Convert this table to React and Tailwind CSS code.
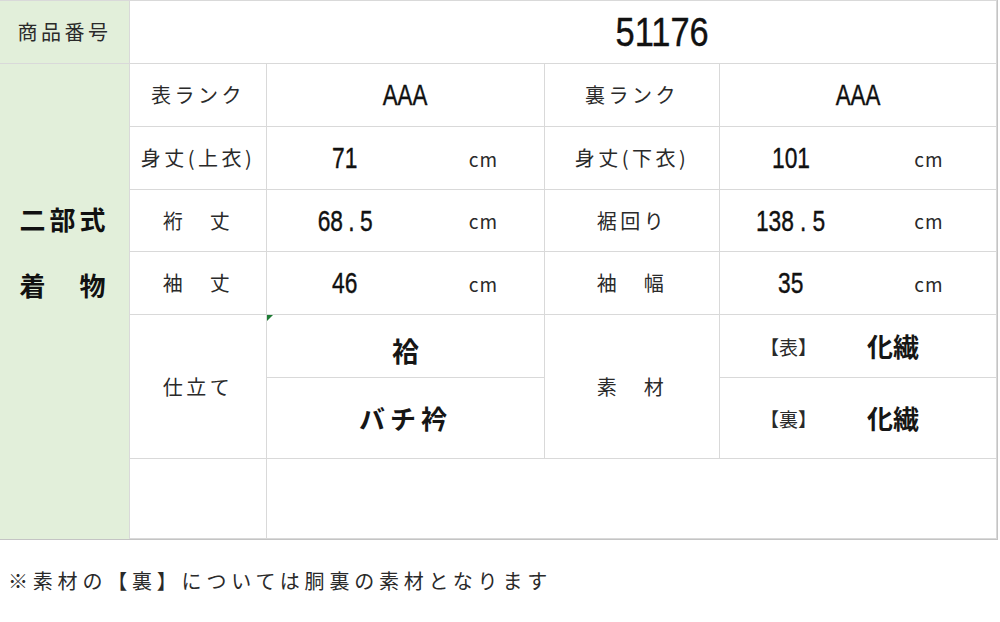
const jp = '[font-family:"Noto_Sans_CJK_JP",sans-serif]'
const latin = '[font-family:"Liberation_Sans",Arial,sans-serif]'

const cell = 'flex items-center justify-center border-r border-b border-[#d9d9d9] bg-white'
const label = `${jp} text-[20px] tracking-[3.5px] text-[#2a2a2a] leading-none`
const thick = '[-webkit-text-stroke:0.4px_#111]'

function Num({ children }) {
  return (
    <span className={`${latin} ${thick} inline-block origin-center scale-x-[0.76] text-[30px] leading-none text-[#111]`}>
      {children}
    </span>
  )
}

function Unit() {
  return <span className={`${jp} text-[19px] tracking-[1px] text-[#2a2a2a] leading-none`}>cm</span>
}

function MeasureRow({ row, leftLabel, leftValue, rightLabel, rightValue }) {
  return (
    <>
      <div className={`${cell} col-start-2`} style={{ gridRowStart: row }}>
        <span className={label}>{leftLabel}</span>
      </div>
      <div className="col-start-3 flex items-center justify-center border-b border-[#d9d9d9]" style={{ gridRowStart: row }}>
        <Num>{leftValue}</Num>
      </div>
      <div className={`${cell} col-start-4`} style={{ gridRowStart: row }}>
        <Unit />
      </div>
      <div className={`${cell} col-start-5`} style={{ gridRowStart: row }}>
        <span className={label}>{rightLabel}</span>
      </div>
      <div className="col-start-6 flex items-center justify-center border-b border-[#d9d9d9]" style={{ gridRowStart: row }}>
        <Num>{rightValue}</Num>
      </div>
      <div className={`${cell} col-start-7`} style={{ gridRowStart: row }}>
        <Unit />
      </div>
    </>
  )
}

function Fabric({ row, side }) {
  return (
    <div className={`${cell} col-start-6 col-span-2 !justify-start gap-[50px] pl-[40px]`} style={{ gridRowStart: row }}>
      <span className={`${jp} text-[19px] text-[#2a2a2a] leading-none`}>【{side}】</span>
      <span className={`${jp} text-[26px] font-bold text-[#161616] leading-none`}>化繊</span>
    </div>
  )
}

export default function App() {
  return (
    <div className="h-[622px] w-[1000px] bg-white">
      <div className="w-[998px] border-r border-b border-[#c4c4c4]">
        <div className="grid grid-cols-[130px_137px_156px_122px_175px_142px_135px] grid-rows-[63px_63px_63px_62px_63px_63px_81px_80px] border-t border-[#d9d9d9]">
          {/* header */}
          <div className="col-start-1 row-start-1 flex items-center justify-center border-r border-b border-[#d9d9d9] bg-[#e2efda]">
            <span className={label}>商品番号</span>
          </div>
          <div className={`${cell} col-start-2 col-span-6 row-start-1 !justify-start pl-[432px]`}>
            <div className="flex w-[200px] justify-center">
              <span className={`${latin} ${thick} inline-block scale-x-[0.86] text-[40px] leading-none text-[#111]`}>51176</span>
            </div>
          </div>

          {/* green block */}
          <div className="col-start-1 row-start-2 row-span-7 flex flex-col items-center gap-[40px] border-r border-[#d9d9d9] bg-[#e2efda] pt-[142px]">
            <span className={`${jp} text-[26px] font-bold tracking-[4px] text-[#111] leading-none`}>二部式</span>
            <span className={`${jp} text-[26px] font-bold tracking-[4px] text-[#111] leading-none`}>着　物</span>
          </div>

          {/* rank */}
          <div className={`${cell} col-start-2 row-start-2`}>
            <span className={label}>表ランク</span>
          </div>
          <div className={`${cell} col-start-3 col-span-2 row-start-2`}>
            <span className={`${latin} ${thick} inline-block scale-x-[0.77] text-[29px] leading-none text-[#111]`}>AAA</span>
          </div>
          <div className={`${cell} col-start-5 row-start-2`}>
            <span className={label}>裏ランク</span>
          </div>
          <div className={`${cell} col-start-6 col-span-2 row-start-2`}>
            <span className={`${latin} ${thick} inline-block scale-x-[0.77] text-[29px] leading-none text-[#111]`}>AAA</span>
          </div>

          <MeasureRow row={3} leftLabel="身丈(上衣)" leftValue="71" rightLabel="身丈(下衣)" rightValue="101" />
          <MeasureRow
            row={4}
            leftLabel="裄　丈"
            leftValue={<>68<span className="px-[7px]">.</span>5</>}
            rightLabel="裾回り"
            rightValue={<>138<span className="px-[8px]">.</span>5</>}
          />
          <MeasureRow row={5} leftLabel="袖　丈" leftValue="46" rightLabel="袖　幅" rightValue="35" />

          {/* shitate / sozai */}
          <div className={`${cell} col-start-2 row-start-6 row-span-2`}>
            <span className={label}>仕立て</span>
          </div>
          <div className={`${cell} relative col-start-3 col-span-2 row-start-6 pt-[8px]`}>
            <span className="absolute top-0 left-0 h-0 w-0 border-t-[6px] border-r-[6px] border-t-[#1e7b34] border-r-transparent" />
            <span className={`${jp} text-[27px] font-bold text-[#161616] leading-none`}>袷</span>
          </div>
          <div className={`${cell} col-start-3 col-span-2 row-start-7`}>
            <span className={`${jp} text-[26px] font-bold tracking-[5px] text-[#161616] leading-none`}>バチ衿</span>
          </div>
          <div className={`${cell} col-start-5 row-start-6 row-span-2`}>
            <span className={label}>素　材</span>
          </div>
          <Fabric row={6} side="表" />
          <Fabric row={7} side="裏" />

          {/* empty last row */}
          <div className={`${cell} col-start-2 row-start-8`} />
          <div className={`${cell} col-start-3 col-span-5 row-start-8`} />
        </div>
      </div>

      <p className={`${jp} mt-[31px] pl-[8px] text-[20px] tracking-[4.8px] text-[#2a2a2a] leading-none`}>
        ※素材の【裏】については胴裏の素材となります
      </p>
    </div>
  )
}
